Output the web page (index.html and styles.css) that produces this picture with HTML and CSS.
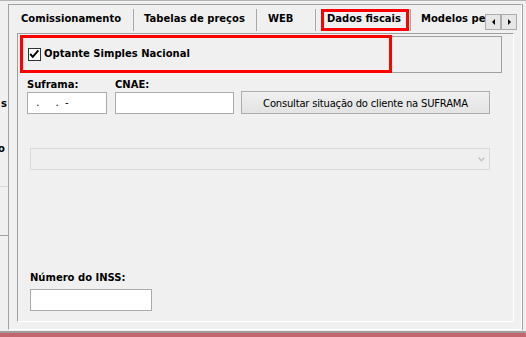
FILE: index.html
```html
<!DOCTYPE html>
<html lang="pt-BR">
<head>
    <meta charset="UTF-8">
    <meta name="viewport" content="width=device-width, initial-scale=1.0">
    <title>Dados fiscais</title>
    <link rel="stylesheet" href="styles.css">
</head>
<body>
    <div class="top-edge"></div>

    <div class="main">
        <div class="side">
            <div class="side-s">s</div>
            <div class="side-o">o</div>
            <div class="side-line-light"></div>
            <div class="side-line"></div>
        </div>

        <div class="frame">
            <div class="tabs">
                <div class="tab-list">
                    <div class="tab tab-1">Comissionamento</div>
                    <div class="tab tab-2">Tabelas de preços</div>
                    <div class="tab tab-3">WEB</div>
                    <div class="tab tab-4"><span class="tab-mark">Dados fiscais</span></div>
                    <div class="tab tab-5">Modelos personalizados</div>
                </div>
                <div class="tab-scroll">
                    <button class="scroll-btn"><span class="arrow-left"></span></button>
                    <button class="scroll-btn"><span class="arrow-right"></span></button>
                </div>
            </div>

            <div class="page">
                <div class="group">
                    <label class="mark-box">
                        <span class="check">
                            <svg width="11" height="11" viewBox="0 0 11 11">
                                <path d="M1.2 5 L3.8 7.8 L9.3 1.3" fill="none" stroke="#000" stroke-width="1.9"/>
                            </svg>
                        </span>
                        <span class="mark-text">Optante Simples Nacional</span>
                    </label>
                </div>

                <div class="fields">
                    <div class="field">
                        <div class="field-label">Suframa:</div>
                        <input class="input input-suframa" type="text" value="  .     .  -">
                    </div>
                    <div class="field">
                        <div class="field-label">CNAE:</div>
                        <input class="input input-cnae" type="text" value="">
                    </div>
                    <button class="btn">Consultar situação do cliente na SUFRAMA</button>
                </div>

                <div class="combo">
                    <svg width="7" height="5" viewBox="0 0 7 5">
                        <path d="M0.5 0.5 L3.5 3.8 L6.5 0.5" fill="none" stroke="#c2c2c2" stroke-width="1.4"/>
                    </svg>
                </div>

                <div class="inss">
                    <div class="field-label">Número do INSS:</div>
                    <input class="input input-inss" type="text" value="">
                </div>
            </div>
        </div>
    </div>

    <div class="bottom-edge"></div>
</body>
</html>
```

FILE: styles.css
```css
html,
body {
    margin: 0;
}

body {
    width: 526px;
    height: 337px;
    overflow: hidden;
    background: #f0f0f0;
    color: #000;
    font-family: "DejaVu Sans", Verdana, sans-serif;
    font-size: 10px;
    line-height: 12px;
}

.top-edge {
    height: 4px;
    box-sizing: border-box;
    border-top: 1px solid #b4b4b4;
}

.main {
    display: flex;
    height: 326px;
}

/* clipped panel at the left */
.side {
    width: 8px;
    overflow: hidden;
    font-weight: bold;
}

.side-s {
    height: 12px;
    margin-top: 94px;
    padding-left: 1px;
}

.side-o {
    height: 12px;
    margin-top: 33px;
    margin-left: -2px;
}

.side-line-light {
    margin-top: 31px;
    border-top: 1px solid #dcdcdc;
}

.side-line {
    margin-top: 48px;
    border-top: 1px solid #a0a0a0;
}

.frame {
    width: 514px;
    height: 326px;
    box-sizing: border-box;
    padding: 0 0 7px 8px;
    border-left: 1px solid #a0a0a0;
    border-top: 1px solid #a0a0a0;
    border-right: 1px solid #fff;
    border-bottom: 1px solid #fff;
    box-shadow: 1px 0 0 #a0a0a0;
}

/* tabs */
.tabs {
    display: flex;
    height: 28px;
}

.tab-list {
    flex: 1;
    display: flex;
    overflow: hidden;
    white-space: nowrap;
    font-weight: bold;
}

.tab {
    flex: none;
    height: 22px;
    margin-top: 4px;
    padding-top: 4px;
    box-sizing: border-box;
    border-right: 1px solid #a8a8a8;
}

.tab-1 {
    width: 117px;
    padding-left: 4px;
}

.tab-2 {
    width: 123px;
    padding-left: 10px;
}

.tab-3 {
    width: 59px;
    padding-left: 11px;
}

.tab-4 {
    width: 95px;
    padding-top: 0;
    padding-left: 5px;
}

.tab-5 {
    padding-left: 10px;
    border-right: none;
}

.tab-mark {
    display: inline-block;
    width: 88px;
    height: 22px;
    box-sizing: border-box;
    border: 3px solid #ff0000;
    padding: 1px 0 0 3px;
}

.tab-scroll {
    display: flex;
    height: 16px;
    margin: 9px 4px 0 0;
}

.scroll-btn {
    width: 16px;
    height: 16px;
    padding: 0;
    display: flex;
    align-items: center;
    justify-content: center;
    border: 1px solid #acacac;
    background: #e6e6e6;
}

.arrow-left,
.arrow-right {
    width: 0;
    height: 0;
    border-style: solid;
}

.arrow-left {
    border-width: 3px 3px 3px 0;
    border-color: transparent #000 transparent transparent;
}

.arrow-right {
    border-width: 3px 0 3px 3px;
    border-color: transparent transparent transparent #000;
}

/* tab page */
.page {
    height: 289px;
    box-sizing: border-box;
    margin-right: 7px;
    border: 1px solid;
    border-color: #a0a0a0 #fff #fff #a0a0a0;
}

.group {
    width: 482px;
    height: 37px;
    box-sizing: border-box;
    margin: 2px 0 0 2px;
    border: 1px solid #a0a0a0;
}

.mark-box {
    display: flex;
    align-items: center;
    width: 372px;
    height: 38px;
    box-sizing: border-box;
    margin: -2px 0 0 -1px;
    padding-left: 5px;
    border: 3px solid #ff0000;
    font-weight: bold;
}

.check {
    display: flex;
    width: 13px;
    height: 13px;
    box-sizing: border-box;
    border: 1px solid #333;
    background: #fff;
}

.mark-text {
    margin-left: 3px;
}

.fields {
    display: flex;
    align-items: flex-end;
    gap: 8px;
    margin: 6px 0 0 9px;
}

.field-label {
    height: 12px;
    margin-bottom: 1px;
    font-weight: bold;
    white-space: nowrap;
}

.input {
    display: block;
    height: 22px;
    box-sizing: border-box;
    margin: 0;
    padding: 0 2px 1px;
    border: 1px solid #ababab;
    background: #fff;
    color: #000;
    font: 10px "DejaVu Sans", Verdana, sans-serif;
    white-space: pre;
}

.input-suframa {
    width: 80px;
}

.input-cnae {
    width: 119px;
}

.input-inss {
    width: 122px;
}

.btn {
    width: 249px;
    height: 23px;
    margin: 0 0 0 -1px;
    padding: 2px 0 0;
    border: 1px solid #adadad;
    background: linear-gradient(#f0f0f0, #e3e3e3);
    color: #000;
    font: 10px "DejaVu Sans", Verdana, sans-serif;
    letter-spacing: -0.2px;
    white-space: nowrap;
}

.combo {
    display: flex;
    align-items: center;
    justify-content: flex-end;
    width: 460px;
    height: 22px;
    box-sizing: border-box;
    margin: 34px 0 0 12px;
    padding-right: 4px;
    border: 1px solid #dadada;
    background: #efefef;
}

.inss {
    margin: 102px 0 0 12px;
}

.inss .field-label {
    margin-bottom: 5px;
}

.bottom-edge {
    height: 6px;
    box-sizing: border-box;
    margin-top: 1px;
    border-top: 2px solid #9d9d9d;
    background: #c1666f;
}
```
